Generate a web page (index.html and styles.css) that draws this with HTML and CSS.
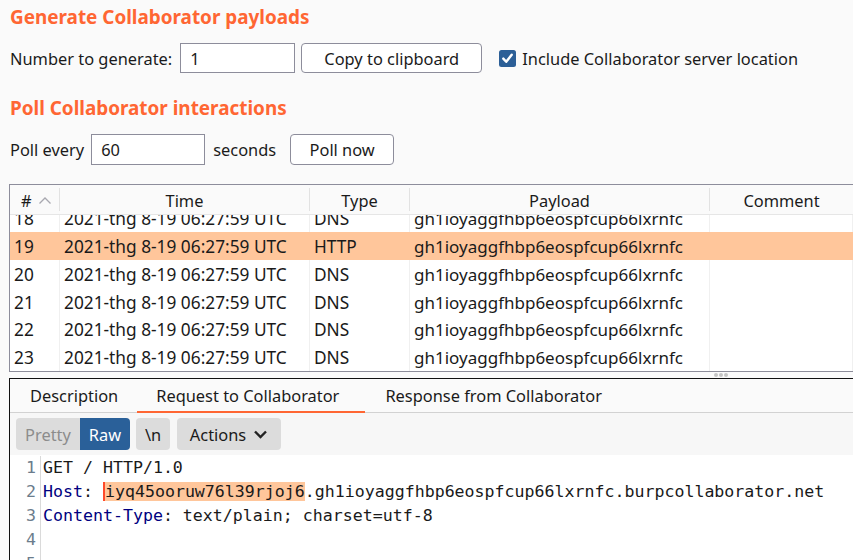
FILE: index.html
```html
<!DOCTYPE html>
<html>
<head>
<meta charset="utf-8">
<link rel="stylesheet" href="styles.css">
</head>
<body>
<div class="top">
  <h2 class="heading h-first">Generate Collaborator payloads</h2>
  <div class="row row-gen">
    <span class="label">Number to generate:</span>
    <span class="input in-num">1</span>
    <span class="btn btn-copy">Copy to clipboard</span>
    <span class="check"><svg width="17" height="17" viewBox="0 0 17 17"><rect x="0" y="0" width="17" height="17" rx="2.5" fill="#2c5f97"/><path d="M4.3 8.6 L7.2 11.8 L12.7 4.8" fill="none" stroke="#fff" stroke-width="2.4" stroke-linecap="round" stroke-linejoin="round"/></svg></span>
    <span class="label">Include Collaborator server location</span>
  </div>
  <h2 class="heading h-second">Poll Collaborator interactions</h2>
  <div class="row row-poll">
    <span class="label">Poll every</span>
    <span class="input in-poll">60</span>
    <span class="label lbl-sec">seconds</span>
    <span class="btn btn-poll">Poll now</span>
  </div>
</div>

<div class="table">
  <div class="thead">
    <div class="th c-num">#<svg class="sort" width="14" height="9" viewBox="0 0 14 9"><path d="M1.5 7.5 L7 2 L12.5 7.5" fill="none" stroke="#a8a8b0" stroke-width="1.3"/></svg></div>
    <div class="th c-time">Time</div>
    <div class="th c-type">Type</div>
    <div class="th c-pay">Payload</div>
    <div class="th c-com">Comment</div>
  </div>
  <div class="tbody">
    <div class="rows">
      <div class="tr"><div class="td c-num">18</div><div class="td c-time">2021-thg 8-19 06:27:59 UTC</div><div class="td c-type">DNS</div><div class="td c-pay">gh1ioyaggfhbp6eospfcup66lxrnfc</div><div class="td c-com"></div></div>
      <div class="tr sel"><div class="td c-num">19</div><div class="td c-time">2021-thg 8-19 06:27:59 UTC</div><div class="td c-type">HTTP</div><div class="td c-pay">gh1ioyaggfhbp6eospfcup66lxrnfc</div><div class="td c-com"></div></div>
      <div class="tr"><div class="td c-num">20</div><div class="td c-time">2021-thg 8-19 06:27:59 UTC</div><div class="td c-type">DNS</div><div class="td c-pay">gh1ioyaggfhbp6eospfcup66lxrnfc</div><div class="td c-com"></div></div>
      <div class="tr"><div class="td c-num">21</div><div class="td c-time">2021-thg 8-19 06:27:59 UTC</div><div class="td c-type">DNS</div><div class="td c-pay">gh1ioyaggfhbp6eospfcup66lxrnfc</div><div class="td c-com"></div></div>
      <div class="tr"><div class="td c-num">22</div><div class="td c-time">2021-thg 8-19 06:27:59 UTC</div><div class="td c-type">DNS</div><div class="td c-pay">gh1ioyaggfhbp6eospfcup66lxrnfc</div><div class="td c-com"></div></div>
      <div class="tr"><div class="td c-num">23</div><div class="td c-time">2021-thg 8-19 06:27:59 UTC</div><div class="td c-type">DNS</div><div class="td c-pay">gh1ioyaggfhbp6eospfcup66lxrnfc</div><div class="td c-com"></div></div>
    </div>
  </div>
</div>
<div class="splitter"><span class="dot"></span><span class="dot"></span><span class="dot"></span></div>

<div class="panel">
  <div class="tabs">
    <div class="tab">Description</div>
    <div class="tab active">Request to Collaborator</div>
    <div class="tab">Response from Collaborator</div>
  </div>
  <div class="toolbar">
    <div class="seg"><span class="seg-item off">Pretty</span><span class="seg-item on">Raw</span></div>
    <span class="tbtn tbtn-nl">\n</span>
    <span class="tbtn tbtn-act">Actions <svg width="15" height="10" viewBox="0 0 15 10"><path d="M2 2.5 L7.5 8 L13 2.5" fill="none" stroke="#222" stroke-width="2.4"/></svg></span>
  </div>
  <div class="editor">
    <div class="gutter">
      <div class="ln">1</div><div class="ln">2</div><div class="ln">3</div><div class="ln">4</div><div class="ln">5</div>
    </div>
    <div class="code">
      <div class="line">GET / HTTP/1.0</div>
      <div class="line"><span class="key">Host</span>: <span class="hl">iyq45ooruw76l39rjoj6</span>.gh1ioyaggfhbp6eospfcup66lxrnfc.burpcollaborator.net</div>
      <div class="line"><span class="key">Content-Type</span>: text/plain; charset=utf-8</div>
      <div class="line"></div>
      <div class="line"></div>
    </div>
  </div>
</div>
</body>
</html>
```

FILE: styles.css
```css
* { box-sizing: border-box; }
html, body { margin: 0; padding: 0; }
body {
  width: 853px;
  height: 560px;
  overflow: hidden;
  background: #fafafa;
  font-family: "Noto Sans", "DejaVu Sans", sans-serif;
  font-size: 16.4px;
  color: #1a1a1a;
}
.top { padding: 4px 0 0 10px; }
.heading {
  margin: 0;
  height: 26px;
  line-height: 26px;
  font-size: 18.9px;
  font-weight: 700;
  color: #ff6633;
}
.h-second { margin-top: 22px; }
.row {
  display: flex;
  align-items: center;
  margin-top: 12px;
  height: 31px;
  padding-top: 1px;
}
.row-poll { height: 32px; }
.label { white-space: nowrap; }
.input {
  height: 100%;
  background: #fff;
  border: 1px solid #8d8d9b;
  display: flex;
  align-items: center;
  padding-left: 9px;
}
.in-num { width: 115px; margin-left: 8px; }
.in-poll { width: 114px; margin-left: 7px; }
.lbl-sec { margin-left: 8px; }
.btn {
  height: 100%;
  background: #fff;
  border: 1px solid #8d8d9b;
  border-radius: 4px;
  display: flex;
  align-items: center;
  justify-content: center;
}
.btn-copy { width: 181px; margin-left: 6px; }
.btn-poll { width: 104px; margin-left: 14px; }
.check { margin-left: 17px; margin-right: 6px; display: flex; }
.table {
  margin: 19px 0 0 9px;
  border: 1px solid #8d8d9b;
  border-right: none;
  width: 844px;
  background: #fff;
  font-size: 17.3px;
}
.thead {
  display: flex;
  height: 30px;
  background: #fafafa;
  border-bottom: 1px solid #e6e6e6;
  font-size: 16.4px;
}
.th {
  display: flex;
  align-items: center;
  justify-content: center;
  border-right: 1px solid #e2e2e2;
  margin: 3px 0;
  padding-top: 2px;
}
.th.c-num { justify-content: flex-start; padding-left: 11px; }
.sort { margin-left: 6px; }
.c-num { width: 50px; flex: none; }
.c-time { width: 250px; flex: none; }
.c-type { width: 100px; flex: none; }
.c-pay { width: 300px; flex: none; }
.c-com { flex: 1; border-right: none; }
.tbody {
  height: 156px;
  overflow: hidden;
}
.rows { margin-top: -11px; }
.tr {
  display: flex;
  height: 27.75px;
  align-items: stretch;
}
.tr.sel { background: #ffc69b; }
.td {
  display: flex;
  align-items: center;
  padding-left: 4px;
  border-right: 1px solid #f0f0f0;
  white-space: nowrap;
  padding-top: 2px;
}
.td.c-pay { font-size: 17px; }
.tr.sel .td { border-right-color: transparent; }
.splitter {
  height: 6px;
  display: flex;
  align-items: center;
  gap: 1px;
  padding-left: 714px;
}
.dot {
  width: 4px;
  height: 4px;
  border-radius: 50%;
  background: #c4c4c4;
}
.panel {
  margin-left: 9px;
  border-top: 1px solid #111;
  border-left: 1px solid #111;
  height: 190px;
}
.tabs {
  display: flex;
  height: 34px;
  border-bottom: 1px solid #d2d2d2;
  background: #fafafa;
}
.tab {
  padding: 0 19px 0 20px;
  display: flex;
  align-items: center;
  padding-bottom: 1px;
}
.tab.active { border-bottom: 2px solid #ff6633; margin-bottom: -1px; padding-bottom: 0; padding-left: 19px; padding-right: 26px; }
.toolbar {
  height: 42px;
  background: #f7f7f7;
  display: flex;
  align-items: center;
  padding-left: 6px;
  gap: 6px;
}
.seg {
  display: flex;
  height: 32px;
  border-radius: 4px;
  overflow: hidden;
}
.seg-item {
  display: flex;
  align-items: center;
  justify-content: center;
}
.seg-item.off { background: #dcdcdc; color: #8c8c8c; width: 64px; }
.seg-item.on { background: #2a6099; color: #fff; width: 50px; }
.tbtn {
  height: 32px;
  background: #dcdcdc;
  border-radius: 4px;
  display: flex;
  align-items: center;
  justify-content: center;
  gap: 7px;
}
.tbtn-nl { width: 34px; }
.tbtn-act { width: 104px; margin-left: 1px; }
.editor {
  display: flex;
  background: #fff;
  height: 112px;
  padding-top: 1px;
  font-family: "DejaVu Sans Mono", "Liberation Mono", monospace;
  font-size: 16.6px;
}
.gutter {
  width: 31px;
  border-right: 1px solid #dadada;
  text-align: right;
  padding-right: 4px;
  color: #6b7c8c;
}
.ln, .line { height: 24px; line-height: 24px; }
.code { padding-left: 2px; color: #1a1a1a; }
.line { white-space: pre; }
.key { color: #000080; }
.hl { background: #ffc69b; border-left: 2px solid #ff4a2a; }
```
